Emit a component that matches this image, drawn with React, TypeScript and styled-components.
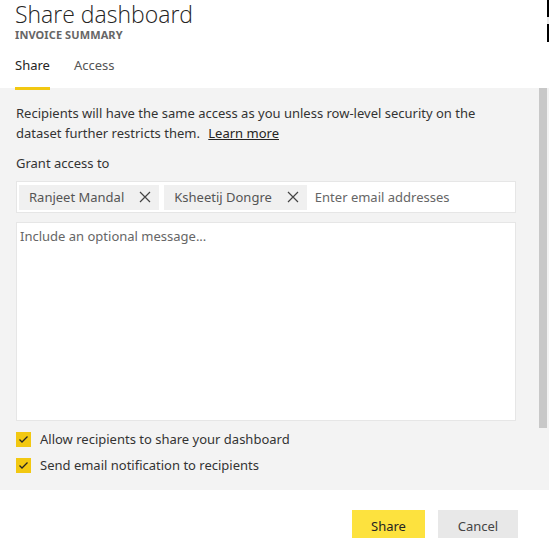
import React from 'react';
import styled, { createGlobalStyle } from 'styled-components';

const GlobalStyle = createGlobalStyle`
  html, body {
    margin: 0;
    padding: 0;
    background: #fff;
  }
  body {
    font-family: 'Noto Sans', 'Open Sans', 'Liberation Sans', sans-serif;
    color: #333;
  }
  * {
    box-sizing: border-box;
  }
`;

const Dialog = styled.div`
  position: relative;
  width: 549px;
  height: 538px;
  overflow: hidden;
  background: #fff;
`;

const EdgeMark = styled.div`
  position: absolute;
  top: 0;
  right: 0;
  width: 2px;
  height: 42px;
  background: linear-gradient(#000 0 17px, #e8e8e8 17px 24px, #000 24px);
`;

const Header = styled.div`
  padding: 0 15px;
`;

const Title = styled.h1`
  margin: 0;
  font-family: 'Open Sans', 'Noto Sans', sans-serif;
  font-weight: 300;
  font-size: 23px;
  line-height: 28px;
  color: #252423;
`;

const Subtitle = styled.div`
  font-size: 11px;
  font-weight: 700;
  line-height: 14px;
  color: #666;
  letter-spacing: 0.1px;
`;

const Tabs = styled.div`
  display: flex;
  gap: 24px;
  margin-top: 14px;
`;

const Tab = styled.div<{ $active?: boolean }>`
  font-size: 13px;
  line-height: 18px;
  padding-bottom: 13px;
  color: ${(p) => (p.$active ? '#252423' : '#555')};
  border-bottom: 3px solid ${(p) => (p.$active ? '#f2c811' : 'transparent')};
`;

const Panel = styled.div`
  display: flex;
  height: 402px;
  background: #f3f3f3;
  margin-top: -2px;
`;

const Body = styled.div`
  flex: 1;
  padding: 15px 23px 0 16px;
  display: flex;
  flex-direction: column;
`;

const ScrollTrack = styled.div`
  width: 8px;
  margin-right: 2px;
`;

const ScrollThumb = styled.div`
  height: 340px;
  background: #c8c8c8;
`;

const Para = styled.p`
  margin: 0;
  font-size: 13px;
  line-height: 20px;
  color: #333;
`;

const LearnMore = styled.a`
  color: #252423;
  text-decoration: underline;
  margin-left: 5px;
`;

const Label = styled.div`
  margin-top: 10px;
  font-size: 13px;
  line-height: 20px;
  color: #333;
`;

const Recipients = styled.div`
  margin-top: 8px;
  height: 32px;
  background: #fff;
  border: 1px solid #e6e6e6;
  display: flex;
  align-items: center;
  gap: 5px;
  padding: 0 2px;
`;

const Chip = styled.div`
  height: 25px;
  display: flex;
  align-items: center;
  justify-content: space-between;
  background: #f0f0f0;
  padding: 0 8px 0 10px;
  font-size: 13px;
  color: #555;
`;

const ChipX = styled.svg`
  width: 12px;
  height: 12px;
  margin-left: 15px;
`;

const EmailInput = styled.input`
  flex: 1;
  border: none;
  outline: none;
  background: transparent;
  font-family: inherit;
  font-size: 13px;
  color: #333;
  padding: 0 0 0 3px;
  &::placeholder {
    color: #666;
  }
`;

const Message = styled.textarea`
  margin-top: 9px;
  height: 199px;
  resize: none;
  background: #fff;
  border: 1px solid #e6e6e6;
  font-family: inherit;
  font-size: 13px;
  line-height: 18px;
  padding: 4px 3px;
  outline: none;
  &::placeholder {
    color: #666;
  }
`;

const CheckRow = styled.label`
  display: flex;
  align-items: center;
  gap: 9px;
  margin-top: 11px;
  font-size: 13px;
  line-height: 15px;
  color: #333;
`;

const CheckBox = styled.span`
  width: 15px;
  height: 15px;
  background: #f2c811;
  display: flex;
  align-items: center;
  justify-content: center;
`;

const Footer = styled.div`
  display: flex;
  justify-content: flex-end;
  gap: 13px;
  padding: 20px 31px 0 0;
`;

const Button = styled.button<{ $primary?: boolean }>`
  height: 32px;
  width: ${(p) => (p.$primary ? '73px' : '80px')};
  padding: 0;
  border: none;
  font-family: inherit;
  font-size: 13px;
  color: ${(p) => (p.$primary ? '#252423' : '#444')};
  background: ${(p) => (p.$primary ? '#fde23e' : '#e8e8e8')};
`;

const CloseIcon = () => (
  <ChipX viewBox="0 0 12 12">
    <path d="M1 1L11 11M11 1L1 11" stroke="#444" strokeWidth="1.2" fill="none" />
  </ChipX>
);

const Check = () => (
  <svg width="11" height="9" viewBox="0 0 11 9">
    <path d="M1.5 4.5L4 7L9.5 1.5" stroke="#252423" strokeWidth="1.3" fill="none" />
  </svg>
);

const App = () => {
  const recipients = ['Ranjeet Mandal', 'Ksheetij Dongre'];

  return (
    <Dialog>
      <GlobalStyle />
      <EdgeMark />
      <Header>
        <Title>Share dashboard</Title>
        <Subtitle>INVOICE SUMMARY</Subtitle>
        <Tabs>
          <Tab $active>Share</Tab>
          <Tab>Access</Tab>
        </Tabs>
      </Header>

      <Panel>
        <Body>
          <Para>
            Recipients will have the same access as you unless row-level security on the
            dataset further restricts them. <LearnMore>Learn more</LearnMore>
          </Para>
          <Label>Grant access to</Label>
          <Recipients>
            {recipients.map((name) => (
              <Chip key={name}>
                {name}
                <CloseIcon />
              </Chip>
            ))}
            <EmailInput placeholder="Enter email addresses" />
          </Recipients>
          <Message placeholder="Include an optional message..." />
          <CheckRow>
            <CheckBox>
              <Check />
            </CheckBox>
            Allow recipients to share your dashboard
          </CheckRow>
          <CheckRow>
            <CheckBox>
              <Check />
            </CheckBox>
            Send email notification to recipients
          </CheckRow>
        </Body>
        <ScrollTrack>
          <ScrollThumb />
        </ScrollTrack>
      </Panel>

      <Footer>
        <Button $primary>Share</Button>
        <Button>Cancel</Button>
      </Footer>
    </Dialog>
  );
};

export default App;
